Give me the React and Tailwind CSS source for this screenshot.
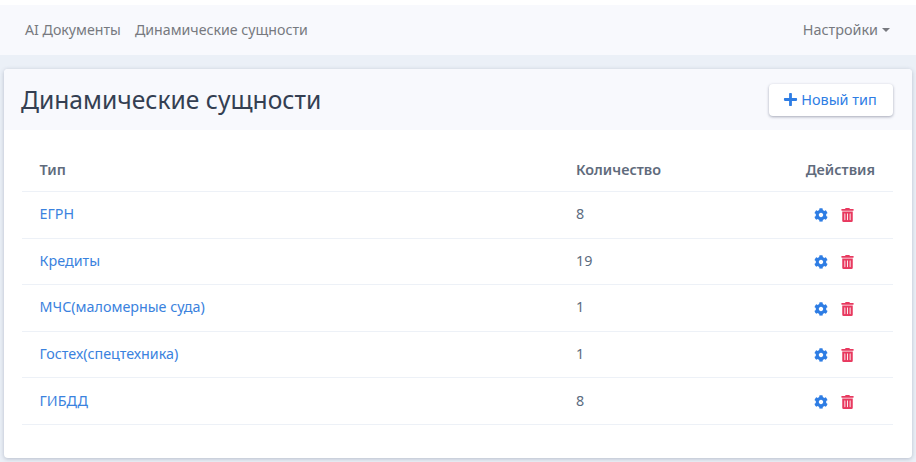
import React from 'react';
import { FaCog, FaPlus, FaTrashAlt } from 'react-icons/fa';

const rows = [
  { name: 'ЕГРН', count: 8 },
  { name: 'Кредиты', count: 19 },
  { name: 'МЧС(маломерные суда)', count: 1 },
  { name: 'Гостех(спецтехника)', count: 1 },
  { name: 'ГИБДД', count: 8 },
];

const App = () => {
  return (
    <div className="h-[462px] w-[916px] overflow-hidden bg-[#ebf0f7] pt-[5px] font-['Noto_Sans',sans-serif] shadow-[inset_0_5px_0_#ffffff]">
      <nav className="flex h-[50px] items-center justify-between bg-[#f8f9fd] pl-[25px] pr-[26px] text-[14.4px] text-[#77797f]">
        <div className="flex gap-[14px] text-[14.2px]">
          <span>AI Документы</span>
          <span>Динамические сущности</span>
        </div>
        <div className="flex items-center gap-[4px]">
          <span>Настройки</span>
          <span className="mt-[1px] border-x-[4px] border-t-[4px] border-x-transparent border-t-[#77797f]" />
        </div>
      </nav>

      <main className="mx-[4px] mt-[14px] h-[389px] rounded-[4px] bg-white shadow-[0_1px_4px_rgba(60,70,100,0.3)]">
        <header className="flex h-[61px] items-center justify-between rounded-t-[4px] bg-[#f8f9fd] pl-[17px] pr-[19px]">
          <h1 className="text-[24.64px] leading-[32px] text-[#343f52]">Динамические сущности</h1>
          <button className="flex h-[32px] w-[124px] items-center justify-center gap-[3px] rounded-[4px] bg-white pr-[2px] text-[14.4px] text-[#2e7de4] shadow-[0_1px_3px_rgba(40,50,80,0.4)]">
            <FaPlus className="h-[15px] w-[15px]" />
            Новый тип
          </button>
        </header>

        <div className="pl-[18px] pr-[19px] pt-[17px]">
          <table className="w-full table-fixed text-[14.3px]">
            <thead>
              <tr className="h-[44.6px] border-b border-[#edf1f7] text-[14.4px] text-[#5f6b7c]">
                <th className="w-[554px] pl-[17.6px] pt-[1px] text-left font-semibold">Тип</th>
                <th className="pt-[1px] text-left font-semibold">Количество</th>
                <th className="w-[105px] pr-[18px] pt-[1px] text-right font-semibold">Действия</th>
              </tr>
            </thead>
            <tbody>
              {rows.map((row) => (
                <tr key={row.name} className="h-[46.6px] border-b border-[#edf1f7]">
                  <td className="pl-[17.6px] pb-[2px] text-[#3a82de]">{row.name}</td>
                  <td className="pb-[2px] text-[#5b6b80]">{row.count}</td>
                  <td>
                    <div className="flex items-center gap-[13px] pl-[26px] pt-[1px]">
                      <FaCog className="h-[14px] w-[14px] text-[#2e7de4]" />
                      <FaTrashAlt className="h-[14px] w-[13px] text-[#e8395f]" />
                    </div>
                  </td>
                </tr>
              ))}
            </tbody>
          </table>
        </div>
      </main>
    </div>
  );
};

export default App;
